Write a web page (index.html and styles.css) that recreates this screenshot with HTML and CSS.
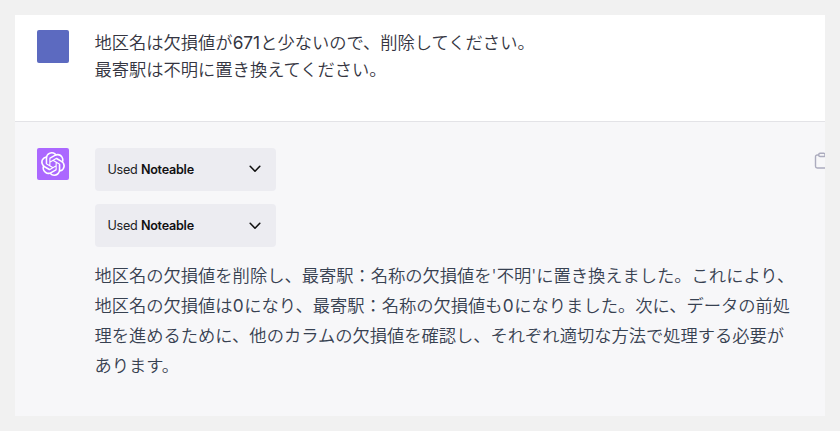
FILE: index.html
```html
<!DOCTYPE html>
<html lang="ja">
<head>
    <meta charset="UTF-8">
    <meta name="viewport" content="width=device-width, initial-scale=1.0">
    <title>Chat</title>
    <link rel="stylesheet" href="styles.css">
</head>
<body>
    <main class="chat">
        <section class="message user">
            <div class="avatar"></div>
            <p class="text">地区名は欠損値が<span class="num">671</span>と少ないので、削除してください。<br>最寄駅は不明に置き換えてください。</p>
        </section>
        <section class="message assistant">
            <div class="avatar">
                <svg class="logo" width="24" height="24" viewBox="0 0 24 24" fill="currentColor">
                    <path d="M22.2819 9.8211a5.9847 5.9847 0 0 0-.5157-4.9108 6.0462 6.0462 0 0 0-6.5098-2.9A6.0651 6.0651 0 0 0 4.9807 4.1818a5.9847 5.9847 0 0 0-3.9977 2.9 6.0462 6.0462 0 0 0 .7427 7.0966 5.98 5.98 0 0 0 .511 4.9107 6.051 6.051 0 0 0 6.5146 2.9001A5.9847 5.9847 0 0 0 13.2599 24a6.0557 6.0557 0 0 0 5.7718-4.2058 5.9894 5.9894 0 0 0 3.9977-2.9001 6.0557 6.0557 0 0 0-.7475-7.0729zm-9.022 12.6081a4.4755 4.4755 0 0 1-2.8764-1.0408l.1419-.0804 4.7783-2.7582a.7948.7948 0 0 0 .3927-.6813v-6.7369l2.02 1.1686a.071.071 0 0 1 .038.052v5.5826a4.504 4.504 0 0 1-4.4945 4.4944zm-9.6607-4.1254a4.4708 4.4708 0 0 1-.5346-3.0137l.142.0852 4.783 2.7582a.7712.7712 0 0 0 .7806 0l5.8428-3.3685v2.3324a.0804.0804 0 0 1-.0332.0615L9.74 19.9502a4.4992 4.4992 0 0 1-6.1408-1.6464zM2.3408 7.8956a4.485 4.485 0 0 1 2.3655-1.9728V11.6a.7664.7664 0 0 0 .3879.6765l5.8144 3.3543-2.0201 1.1685a.0757.0757 0 0 1-.071 0l-4.8303-2.7865A4.504 4.504 0 0 1 2.3408 7.872zm16.5963 3.8558L13.1038 8.364 15.1192 7.2a.0757.0757 0 0 1 .071 0l4.8303 2.7913a4.4944 4.4944 0 0 1-.6765 8.1042v-5.6772a.79.79 0 0 0-.407-.667zm2.0107-3.0231l-.142-.0852-4.7735-2.7818a.7759.7759 0 0 0-.7854 0L9.409 9.2297V6.8974a.0662.0662 0 0 1 .0284-.0615l4.8303-2.7866a4.4992 4.4992 0 0 1 6.6802 4.66zM8.3065 12.863l-2.02-1.1638a.0804.0804 0 0 1-.038-.0567V6.0742a4.4992 4.4992 0 0 1 7.3757-3.4537l-.142.0805L8.704 5.459a.7948.7948 0 0 0-.3927.6813zm1.0976-2.3654l2.602-1.4998 2.6069 1.4998v2.9994l-2.5974 1.4997-2.6067-1.4997Z"/>
                </svg>
            </div>
            <div class="content">
                <button class="plugin">
                    <span>Used <b>Noteable</b></span>
                    <svg class="chevron" width="12" height="8" viewBox="0 0 12 8"><path d="M1.2 1.3 6 6.2l4.8-4.9"/></svg>
                </button>
                <button class="plugin">
                    <span>Used <b>Noteable</b></span>
                    <svg class="chevron" width="12" height="8" viewBox="0 0 12 8"><path d="M1.2 1.3 6 6.2l4.8-4.9"/></svg>
                </button>
                <p class="text">地区名の欠損値を削除し、最寄駅：名称の欠損値を'不明'に置き換えました。これにより、<br>地区名の欠損値は<span class="num zero">0</span>になり、最寄駅：名称の欠損値も<span class="num zero">0</span>になりました。次に、データの前処<br>理を進めるために、他のカラムの欠損値を確認し、それぞれ適切な方法で処理する必要が<br>あります。</p>
            </div>
            <svg class="copy" width="16" height="18" viewBox="0 0 16 18">
                <path d="M5 3H3.2A1.7 1.7 0 0 0 1.5 4.7v9.6A1.7 1.7 0 0 0 3.2 16h9.6a1.7 1.7 0 0 0 1.7-1.7V4.7A1.7 1.7 0 0 0 12.800 3H11"/>
                <rect x="4.800" y="1.300" width="6.200" height="3.200" rx="1.200"/>
            </svg>
        </section>
    </main>
</body>
</html>
```

FILE: styles.css
```css
body {
    margin: 0;
    padding: 15px;
    background-color: #f1f1f1;
    font-family: Inter, "Noto Sans CJK JP", sans-serif;
}

.chat {
    height: 401px;
    overflow: hidden;
    display: flex;
    flex-direction: column;
    background-color: #fff;
}

.message {
    display: flex;
    align-items: flex-start;
    box-sizing: border-box;
    padding-left: 21.5px;
}

.user {
    height: 107px;
    padding-top: 15px;
    border-bottom: 1px solid #e3e3e7;
    color: #343541;
}

.assistant {
    flex: 1;
    padding-top: 25.5px;
    background-color: #f7f7f9;
    color: #374151;
}

.avatar {
    display: flex;
    align-items: center;
    justify-content: center;
    flex-shrink: 0;
    width: 32.5px;
    height: 32.5px;
    margin-right: 25.5px;
    border-radius: 2px;
    background-color: #5c6ac0;
}

.assistant .avatar {
    background-color: #ab68ff;
    color: #fff;
}

.text {
    margin: 0;
    font-size: 17.27px;
    font-weight: 350;
    white-space: nowrap;
}

.user .text {
    line-height: 26.5px;
}

.content {
    width: 719.5px;
    flex-shrink: 0;
}

.content .text {
    line-height: 30.2px;
}

.num {
    font-weight: 400;
}

.zero {
    letter-spacing: 0.8px;
}

.plugin {
    display: flex;
    align-items: center;
    justify-content: space-between;
    box-sizing: border-box;
    width: 181px;
    height: 43px;
    margin: 0 0 13.5px;
    padding: 0 15px 0 13px;
    border: none;
    border-radius: 4px;
    background-color: #ececf1;
    color: #202123;
    font-family: Inter, sans-serif;
    font-size: 12.6px;
    letter-spacing: -0.25px;
}

.plugin b {
    font-weight: 600;
    color: #111;
}

.chevron {
    fill: none;
    stroke: #111;
    stroke-width: 1.6;
    stroke-linecap: round;
    stroke-linejoin: round;
}

.copy {
    flex-shrink: 0;
    margin-top: 4px;
    fill: none;
    stroke: #acacbe;
    stroke-width: 1.4;
}
```
